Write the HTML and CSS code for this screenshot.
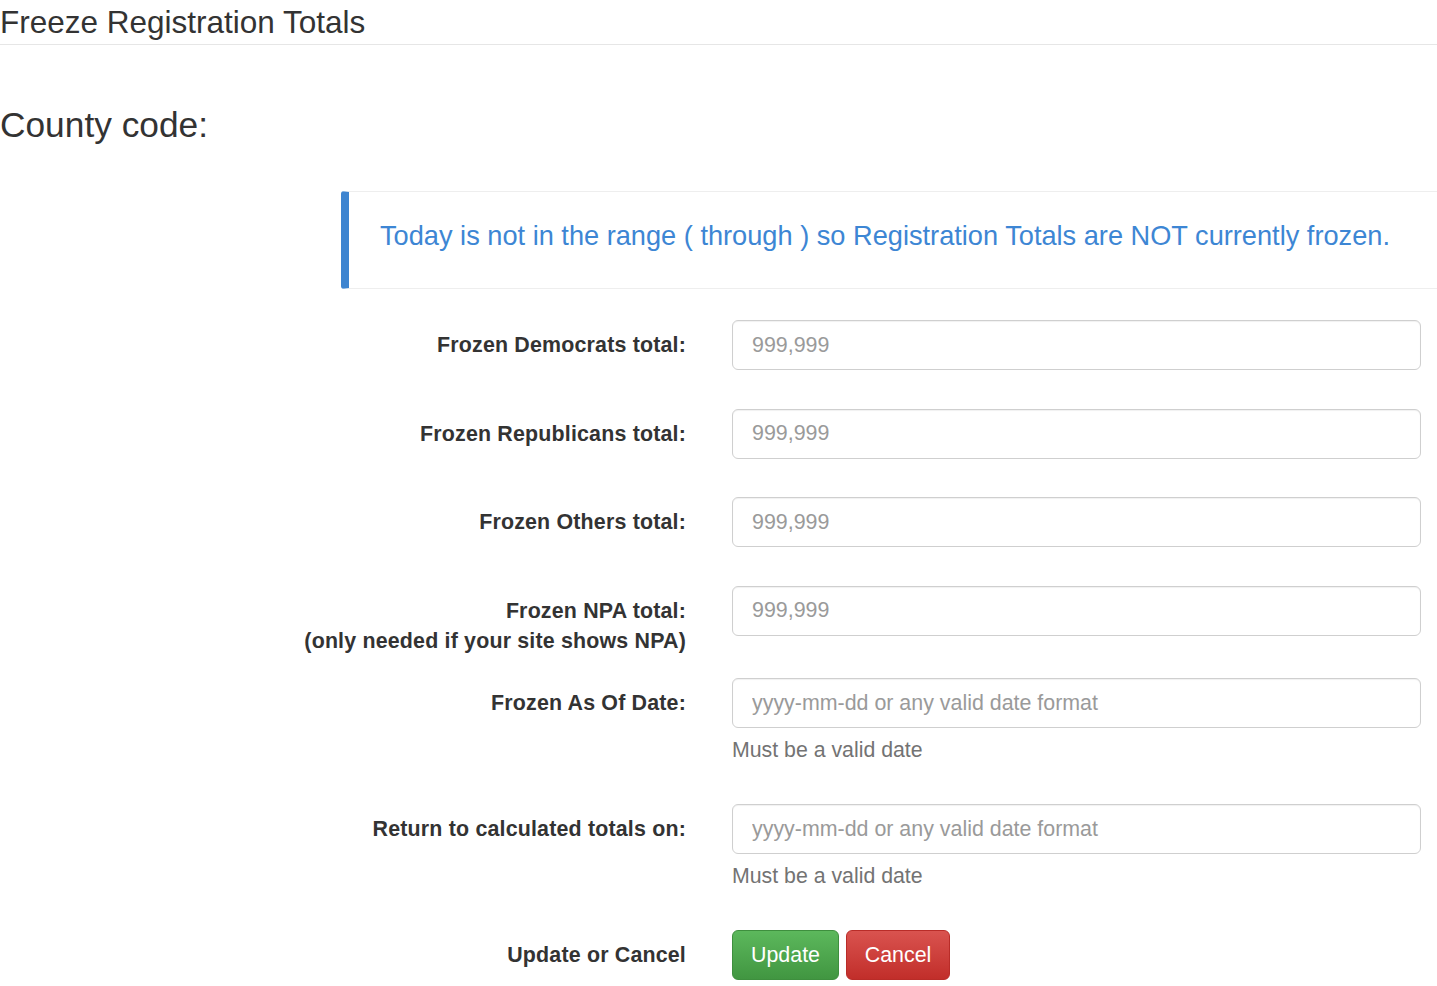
FILE: index.html
```html
<!DOCTYPE html>
<html lang="en">
<head>
<meta charset="utf-8">
<title>Freeze Registration Totals</title>
<link rel="stylesheet" href="styles.css">
</head>
<body>
<div class="page">
  <h1 class="page-title">Freeze Registration Totals</h1>
  <h2 class="county">County code:</h2>
  <blockquote class="notice">Today is not in the range ( through ) so Registration Totals are NOT currently frozen.</blockquote>
  <form class="form">
    <div class="form-group simple">
      <label class="control-label">Frozen Democrats total:</label>
      <div class="controls"><input class="form-control" type="text" placeholder="999,999"></div>
    </div>
    <div class="form-group simple">
      <label class="control-label">Frozen Republicans total:</label>
      <div class="controls"><input class="form-control" type="text" placeholder="999,999"></div>
    </div>
    <div class="form-group simple">
      <label class="control-label">Frozen Others total:</label>
      <div class="controls"><input class="form-control" type="text" placeholder="999,999"></div>
    </div>
    <div class="form-group">
      <label class="control-label">Frozen NPA total:<br>(only needed if your site shows NPA)</label>
      <div class="controls"><input class="form-control" type="text" placeholder="999,999"></div>
    </div>
    <div class="form-group">
      <label class="control-label">Frozen As Of Date:</label>
      <div class="controls">
        <input class="form-control" type="text" placeholder="yyyy-mm-dd or any valid date format">
        <span class="help-block">Must be a valid date</span>
      </div>
    </div>
    <div class="form-group">
      <label class="control-label">Return to calculated totals on:</label>
      <div class="controls">
        <input class="form-control" type="text" placeholder="yyyy-mm-dd or any valid date format">
        <span class="help-block">Must be a valid date</span>
      </div>
    </div>
    <div class="form-group">
      <label class="control-label">Update or Cancel</label>
      <div class="controls buttons">
        <button type="button" class="btn btn-success">Update</button>
        <button type="button" class="btn btn-danger">Cancel</button>
      </div>
    </div>
  </form>
</div>
</body>
</html>
```

FILE: styles.css
```css
html, body {
  margin: 0;
  padding: 0;
  background: #fff;
}

body {
  font-family: "Liberation Sans", Arial, Helvetica, sans-serif;
  font-size: 21.4px;
  line-height: 1.4286;
  color: #333;
  overflow: hidden;
}

.page {
  width: 1437px;
}

.page-title {
  margin: 0;
  font-size: 31.5px;
  font-weight: normal;
  line-height: 44px;
  height: 44px;
  border-bottom: 1.5px solid #e6e6e6;
  color: #333;
}

.county {
  margin: 56px 0 0 0;
  font-size: 35.3px;
  font-weight: normal;
  line-height: 48px;
  color: #333;
}

.notice {
  margin: 42px 0 31px 341px;
  padding: 0 0 9px 31px;
  box-sizing: border-box;
  height: 98px;
  display: flex;
  align-items: center;
  border-left: 8px solid #3d84d0;
  border-top: 1px solid #eeeeee;
  border-bottom: 1px solid #eeeeee;
  border-radius: 3px 0 0 3px;
  font-size: 27.2px;
  color: #3d86d4;
  line-height: 1.3;
}

.form-group {
  display: flex;
  gap: 46px;
  margin-bottom: 21.5px;
}

.control-label {
  width: 686px;
  flex: none;
  text-align: right;
  font-weight: bold;
  letter-spacing: 0.18px;
  padding-top: 10px;
  line-height: 30.6px;
  color: #333;
}

.controls {
  width: 689px;
  flex: none;
}

.simple .controls {
  min-height: 67px;
}

.form-control {
  display: block;
  box-sizing: border-box;
  width: 100%;
  height: 50px;
  padding: 0 19px;
  font-family: inherit;
  font-size: 21.4px;
  color: #555;
  background: #fff;
  border: 1.5px solid #cfcfcf;
  border-radius: 6px;
  box-shadow: inset 0 1px 1px rgba(0,0,0,0.06);
  outline: none;
}

.form-control::placeholder {
  color: #9a9a9a;
}

.help-block {
  display: block;
  margin: 7px 0 17px 0;
  line-height: 30.6px;
  color: #737373;
  font-size: 21.3px;
}

.buttons {
  display: flex;
  gap: 7px;
}

.btn {
  height: 50px;
  padding: 0;
  font-family: inherit;
  font-size: 21.4px;
  color: #fff;
  border-radius: 6px;
  cursor: pointer;
}

.btn-success {
  width: 107px;
  background: linear-gradient(to bottom, #5cb85c 0%, #419641 100%);
  border: 1.5px solid #3e8f3e;
}

.btn-danger {
  width: 104px;
  background: linear-gradient(to bottom, #d9534f 0%, #c12e2a 100%);
  border: 1.5px solid #b92c28;
}
```
